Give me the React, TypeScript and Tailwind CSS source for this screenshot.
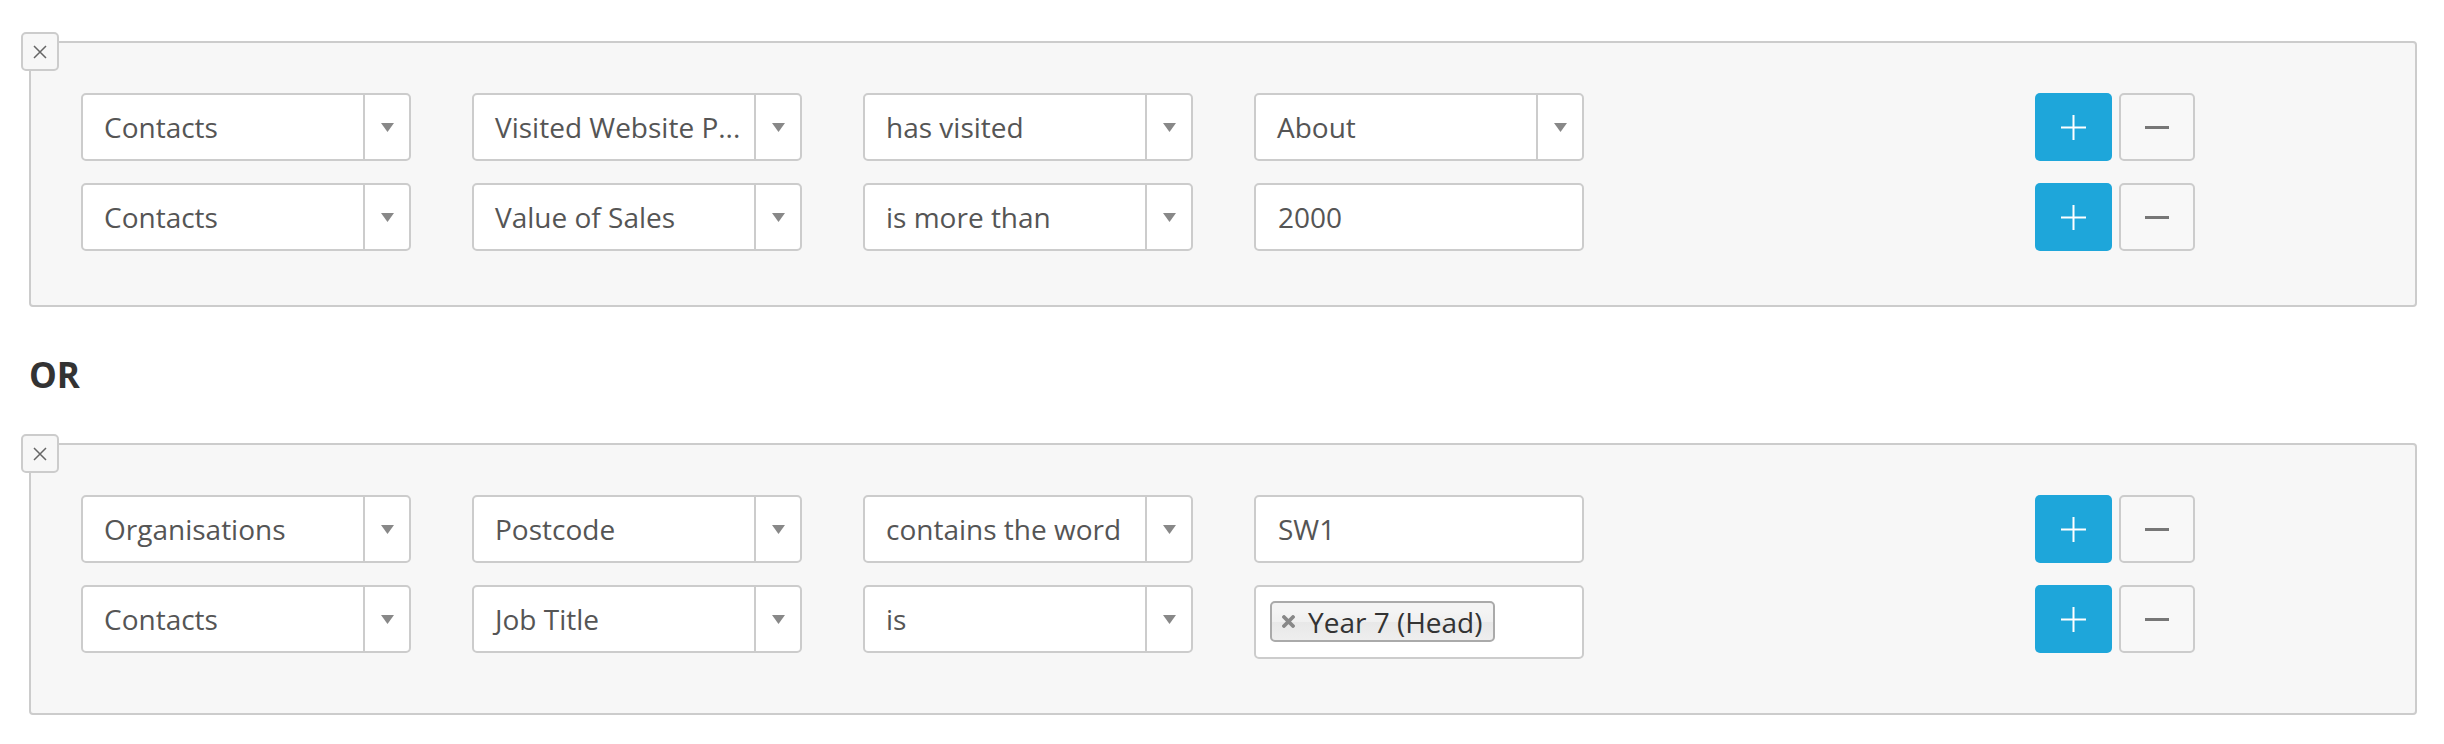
import React from 'react';

type Field =
  | { kind: 'select'; value: string }
  | { kind: 'input'; value: string }
  | { kind: 'tags'; values: string[] };

type Group = { rows: Field[][] };

const groups: Group[] = [
  {
    rows: [
      [
        { kind: 'select', value: 'Contacts' },
        { kind: 'select', value: 'Visited Website P...' },
        { kind: 'select', value: 'has visited' },
        { kind: 'select', value: 'About' },
      ],
      [
        { kind: 'select', value: 'Contacts' },
        { kind: 'select', value: 'Value of Sales' },
        { kind: 'select', value: 'is more than' },
        { kind: 'input', value: '2000' },
      ],
    ],
  },
  {
    rows: [
      [
        { kind: 'select', value: 'Organisations' },
        { kind: 'select', value: 'Postcode' },
        { kind: 'select', value: 'contains the word' },
        { kind: 'input', value: 'SW1' },
      ],
      [
        { kind: 'select', value: 'Contacts' },
        { kind: 'select', value: 'Job Title' },
        { kind: 'select', value: 'is' },
        { kind: 'tags', values: ['Year 7 (Head)'] },
      ],
    ],
  },
];

const Caret = () => (
  <svg width="13" height="9" viewBox="0 0 13 9">
    <path d="M0 0 H13 L6.5 9 Z" fill="#888" />
  </svg>
);

const FieldBox: React.FC<{ field: Field }> = ({ field }) => {
  if (field.kind === 'select') {
    return (
      <div className="flex h-[68px] w-[330px] rounded-[5px] border-2 border-[#ccc] bg-white text-[28px] text-[#555]">
        <div className="flex flex-1 items-center overflow-hidden whitespace-nowrap pl-[21px] pr-[12px]">
          {field.value}
        </div>
        <div className="flex w-[46px] items-center justify-center border-l-2 border-[#ccc]">
          <Caret />
        </div>
      </div>
    );
  }
  if (field.kind === 'input') {
    return (
      <div className="flex h-[68px] w-[330px] items-center rounded-[5px] border-2 border-[#ccc] bg-white pl-[22px] text-[28px] text-[#555]">
        {field.value}
      </div>
    );
  }
  return (
    <div className="flex h-[74px] w-[330px] items-start gap-2 rounded-[5px] border-2 border-[#ccc] bg-white px-[14px] pt-[14px]">
      {field.values.map((v) => (
        <span
          key={v}
          className="flex h-[41px] items-center gap-[13px] rounded-[5px] border-2 border-[#aaa] bg-[linear-gradient(#f4f4f4_20%,#f0f0f0_50%,#e8e8e8_52%,#eeeeee_100%)] pl-[10px] pr-[10px] text-[28px] text-[#333]"
        >
          <svg width="13" height="13" viewBox="0 0 13 13">
            <path d="M2 2 L11 11 M11 2 L2 11" stroke="#888" strokeWidth="3.8" strokeLinecap="round" />
          </svg>
          {v}
        </span>
      ))}
    </div>
  );
};

const RowButtons = () => (
  <div className="ml-[451px] flex gap-[7px]">
    <button className="flex h-[68px] w-[77px] items-center justify-center rounded-[5px] bg-[#1ea6da]">
      <svg width="25" height="25" viewBox="0 0 25 25">
        <path d="M12.5 0 V25 M0 12.5 H25" stroke="#fff" strokeWidth="2" />
      </svg>
    </button>
    <button className="flex h-[68px] w-[76px] items-center justify-center rounded-[5px] border-2 border-[#ccc] bg-[#f8f8f8]">
      <svg width="24" height="3" viewBox="0 0 24 3">
        <rect width="24" height="3" fill="#777" />
      </svg>
    </button>
  </div>
);

const GroupPanel: React.FC<{ group: Group }> = ({ group }) => (
  <div className="relative rounded-[4px] border-2 border-[#ccc] bg-[#f7f7f7] pb-[54px] pl-[50px] pt-[50px]">
    {/* remove group */}
    <button className="absolute -left-[10px] -top-[11px] flex h-[39px] w-[38px] items-center justify-center rounded-[5px] border-2 border-[#ccc] bg-[#f7f7f7]">
      <svg width="14" height="14" viewBox="0 0 14 14">
        <path d="M1 1 L13 13 M13 1 L1 13" stroke="#666" strokeWidth="1.5" />
      </svg>
    </button>
    <div className="flex flex-col gap-[22px]">
      {group.rows.map((row, i) => (
        <div key={i} className="flex items-start">
          <div className="flex items-start gap-[61px]">
            {row.map((f, j) => (
              <FieldBox key={j} field={f} />
            ))}
          </div>
          <RowButtons />
        </div>
      ))}
    </div>
  </div>
);

export default function App() {
  return (
    <div className="min-h-[744px] bg-white pl-[29px] pr-[27px] pt-[41px] [font-family:'Open_Sans',sans-serif]">
      <GroupPanel group={groups[0]} />
      <div className="mb-[51px] mt-[50px] text-[35px] font-bold leading-[35px] text-[#333]">OR</div>
      <GroupPanel group={groups[1]} />
    </div>
  );
}
